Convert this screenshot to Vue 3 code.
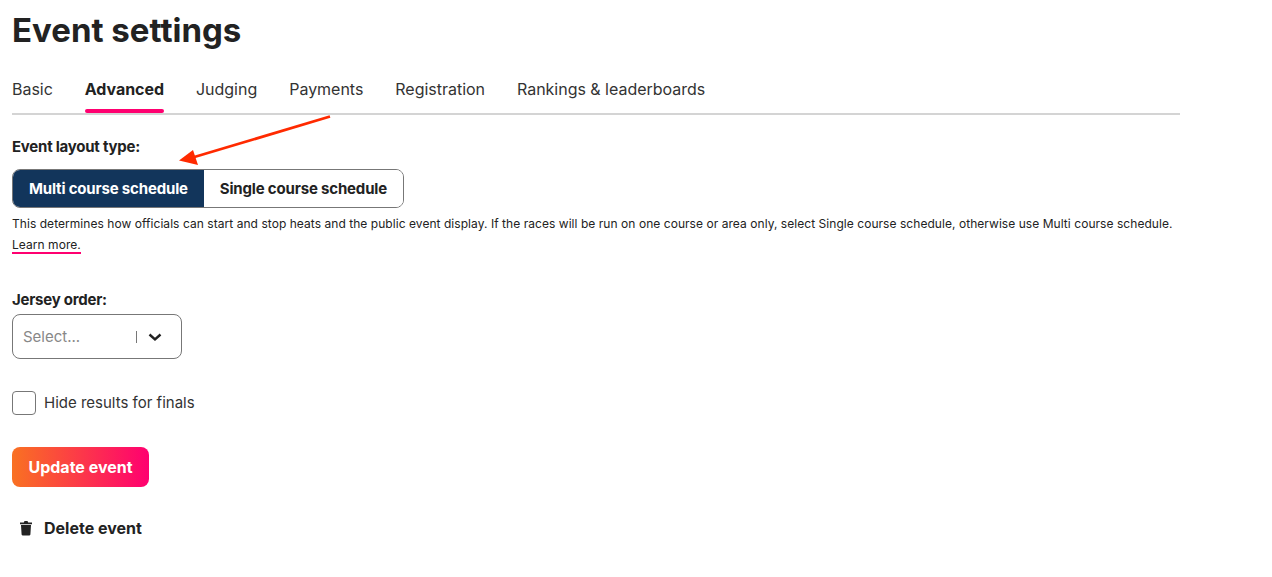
<script setup>
const tabs = ['Basic', 'Advanced', 'Judging', 'Payments', 'Registration', 'Rankings & leaderboards']
</script>

<template>
  <main class="page">
    <h1 class="title">Event settings</h1>
    <nav class="tabs">
      <a v-for="t in tabs" :key="t" class="tab" :class="{ active: t === 'Advanced' }">{{ t }}</a>
    </nav>
    <label class="label first">Event layout type:</label>
    <div class="segment">
      <button class="seg on">Multi course schedule</button>
      <button class="seg">Single course schedule</button>
    </div>
    <p class="help">This determines how officials can start and stop heats and the public event display. If the races will be run on one course or area only, select Single course schedule, otherwise use Multi course schedule. <a class="more">Learn more.</a></p>
    <label class="label jersey">Jersey order:</label>
    <div class="select">
      <span class="placeholder">Select...</span>
      <span class="sep"></span>
      <svg class="chev" width="16" height="16" viewBox="0 0 16 16"><path d="M2.500 5.500L8 10.500l5.500-5" fill="none" stroke="#222" stroke-width="2.400"/></svg>
    </div>
    <div class="check"><span class="box"></span><span>Hide results for finals</span></div>
    <button class="update">Update event</button>
    <div class="delete">
      <svg width="14" height="16" viewBox="0 0 14 16"><path d="M1 2.500h3.800L5.500 1h3l.7 1.500H13v1.700H1zM2 5h10l-.6 9.500a1.300 1.300 0 0 1-1.300 1H3.900a1.300 1.300 0 0 1-1.300-1z" fill="#222"/></svg>
      <span>Delete event</span>
    </div>
    <svg class="arrow" width="160" height="56" viewBox="0 0 160 56">
      <path d="M151 1.500L12 43" stroke="#ff2a00" stroke-width="2.800" fill="none"/>
      <path d="M0 45.500L14 35l5 15z" fill="#ff2a00"/>
    </svg>
  </main>
</template>

<style scoped>
.page { position: relative; width: 1168px; height: 577px; padding: 0 92px 0 12px; font-family: Inter, "Liberation Sans", sans-serif; color: #222; box-sizing: content-box; overflow: hidden; }
.title { margin: 0; padding-top: 12px; font-size: 33px; line-height: 36px; font-weight: 700; }
.tabs { display: flex; gap: 32px; margin-top: 27px; border-bottom: 2px solid #d4d4d4; height: 38px; }
.tab { font-size: 16px; line-height: 26px; padding-top: 1px; height: 37px; color: #333; letter-spacing: -.02px; position: relative; }
.tab.active { font-weight: 700; color: #222; letter-spacing: -.05px; }
.tab.active::after { content: ""; position: absolute; left: 0; right: 0; bottom: 0; height: 4px; border-radius: 2px; background: #ff0070; }
.label { display: block; font-size: 15px; font-weight: 700; line-height: 20px; letter-spacing: -.24px; }
.first { margin-top: 22px; }
.segment { display: inline-flex; margin-top: 12px; border: 1px solid #777; border-radius: 8px; overflow: hidden; height: 39px; box-sizing: border-box; vertical-align: top; }
.seg { border: 0; padding: 0 16px; background: #fff; color: #222; font: 700 15px/37px Inter, sans-serif; letter-spacing: -.17px; }
.seg.on { background: #12355b; color: #fff; }
.help { margin: 5px 0 0; font-size: 12px; line-height: 21px; color: #222; letter-spacing: .05px; }
.more { border-bottom: 2px solid #ff0070; }
.jersey { margin-top: 35px; }
.select { display: flex; align-items: center; width: 170px; height: 45px; margin-top: 4px; border: 1px solid #777; border-radius: 8px; box-sizing: border-box; padding-left: 10px; }
.placeholder { font-size: 15px; color: #888; width: 113px; }
.sep { width: 1px; height: 12px; background: #777; }
.chev { margin-left: 10px; }
.check { display: flex; align-items: center; gap: 8px; margin-top: 32px; font-size: 15px; line-height: 24px; color: #333; }
.box { width: 24px; height: 24px; border: 1px solid #777; border-radius: 4px; box-sizing: border-box; }
.update { display: block; margin-top: 32px; width: 137px; height: 40px; border: 0; border-radius: 8px; background: linear-gradient(90deg, #f97122, #ff0070); color: #fff; font: 700 16px Inter, sans-serif; }
.delete { display: flex; align-items: center; gap: 11px; margin-top: 31px; padding-left: 7px; font-size: 16px; font-weight: 700; line-height: 20px; }
.arrow { position: absolute; left: 179px; top: 115px; }
</style>
